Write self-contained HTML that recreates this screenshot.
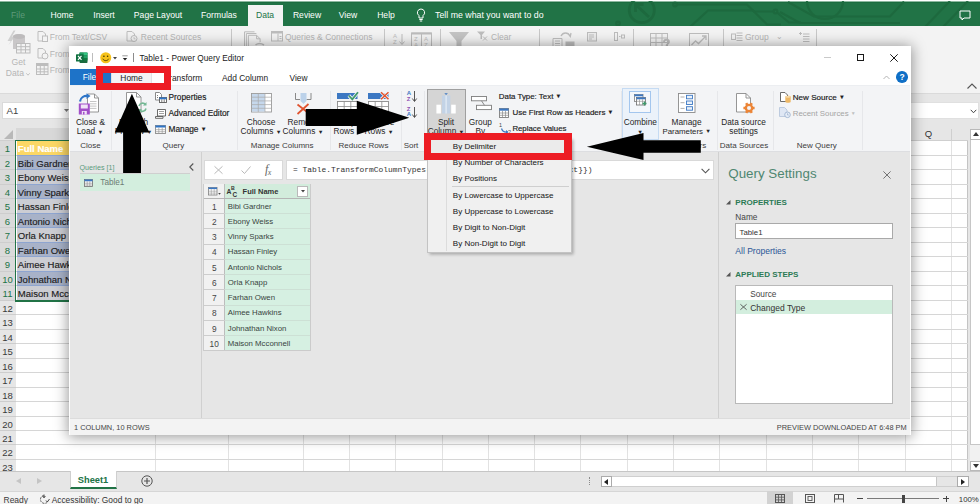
<!DOCTYPE html>
<html><head><meta charset="utf-8"><title>Power Query Editor</title>
<style>
*{box-sizing:border-box;margin:0;padding:0}
html,body{width:980px;height:504px;overflow:hidden;background:#e6e6e6}
body{position:relative;font-family:"Liberation Sans",sans-serif;font-size:8.3px;color:#262626}
.ab{position:absolute}
.t{position:absolute;white-space:nowrap;line-height:1}
.c{position:absolute;white-space:nowrap;line-height:1;transform:translateX(-50%)}
.g{color:#b3b3b3}
.vs{position:absolute;width:1px;background:#dcdcdc}
svg{position:absolute;overflow:visible}
</style></head><body>

<div class="ab" style="left:0;top:0;width:980px;height:1px;background:#fff"></div>
<div class="ab" style="left:0;top:1px;width:980px;height:25px;background:#217346;border-top:1px solid #8db8a0"></div>
<div class="ab" style="left:0;top:2px;width:980px;height:1px;background:#1b6c3f"></div>
<div class="ab" style="left:247.5px;top:4.5px;width:35.5px;height:22px;background:#f3f3f3"></div>
<svg style="left:0;top:1px;overflow:hidden" width="980" height="25" viewBox="0 1 980 25"><g fill="none" stroke="#1d693e" stroke-width="2.200" opacity=".9"><circle cx="641.800" cy="10.200" r="12.500" stroke-width="2.800"/><path d="M649 17L636 5M635.500 12V4.500h8" stroke-width="2.800"/><circle cx="675" cy="4.500" r="1.800"/><path d="M677 4.500h70l7 7h20"/><circle cx="775.500" cy="11.500" r="1.800"/><path d="M777 12.500l12 10h12"/><circle cx="618" cy="23.500" r="1.800"/><path d="M690 27l18-16.500h45l14 14h14"/><path d="M807 1a18 18 0 0 0 36 0"/><path d="M788 2l26 14.500h76l14-15"/><path d="M780 12l20 11h100"/><path d="M950 1l-25 26M968 1l-25 26"/></g></svg>
<div class="c" style="left:18px;top:11px;font-size:8.6px;color:#5f9a7b">File</div>
<div class="c" style="left:62px;top:11px;font-size:8.6px;color:#fff">Home</div>
<div class="c" style="left:104px;top:11px;font-size:8.6px;color:#fff">Insert</div>
<div class="c" style="left:158px;top:11px;font-size:8.6px;color:#fff">Page Layout</div>
<div class="c" style="left:219px;top:11px;font-size:8.6px;color:#fff">Formulas</div>
<div class="c" style="left:265px;top:11px;font-size:8.6px;color:#217346">Data</div>
<div class="c" style="left:307px;top:11px;font-size:8.6px;color:#fff">Review</div>
<div class="c" style="left:348px;top:11px;font-size:8.6px;color:#fff">View</div>
<div class="c" style="left:386px;top:11px;font-size:8.6px;color:#fff">Help</div>
<svg style="left:416px;top:8px" width="10" height="14" viewBox="0 0 10 14"><path d="M5 1a3.6 3.6 0 0 0-2 6.6V10h4V7.6A3.6 3.6 0 0 0 5 1zM3.3 11.5h3.4M3.8 13h2.4" fill="none" stroke="#fff" stroke-width="1"/></svg>
<div class="t" style="left:435px;top:11px;font-size:8.8px;color:#fff">Tell me what you want to do</div>
<svg style="left:959px;top:10px" width="12" height="11" viewBox="0 0 12 11"><path d="M1 1h10v7H5l-2 2V8H1z" fill="none" stroke="#fff" stroke-width="1"/></svg>
<div class="ab" style="left:0;top:26px;width:980px;height:67px;background:#f3f3f3"></div>
<div class="ab" style="left:0;top:93px;width:980px;height:1px;background:#dadada"></div>
<svg style="left:6px;top:30px" width="26" height="25" viewBox="0 0 26 25">
<path d="M7.500 .5L1.500 11h3.300L2.500 15l6.500-8.500H6l3.500-6z" fill="#d0d0d0"/>
<path d="M7 6.5c0-1.6 2.7-2.6 6-2.6s6 1 6 2.600V19H7z" fill="#c9c7c8"/>
<ellipse cx="13" cy="6.500" rx="6" ry="2.400" fill="#bdbbbc"/>
<rect x="10.500" y="13.500" width="13.500" height="9.500" fill="#f3f3f3" stroke="#bcbcbc"/>
<path d="M10.500 16.700h13.500M10.500 19.800h13.500M15 13.500v9.500M19.500 13.500v9.500" stroke="#bcbcbc" fill="none"/>
</svg>
<div class="c" style="left:18.5px;top:58.0px;font-size:8.6px;color:#b5b5b5">Get</div>
<div class="t" style="left:5.8px;top:69.3px;font-size:8.6px;color:#b5b5b5">Data</div>
<svg style="left:26px;top:72.500px" width="4" height="3" viewBox="0 0 4 3"><path d="M.3 .3L2 2.200 3.700 .3" fill="none" stroke="#b5b5b5" stroke-width=".8"/></svg>
<svg style="left:37px;top:31px" width="12" height="11" viewBox="0 0 12 11"><path d="M1 .5h5l2.500 2.500V10H1z" fill="#f3f3f3" stroke="#bdbdbd"/><rect x="5.500" y="5" width="5" height="5.500" fill="#f3f3f3" stroke="#bdbdbd"/></svg>
<div class="t" style="left:49.7px;top:33.0px;font-size:8.5px;color:#b5b5b5">From Text/CSV</div>
<svg style="left:37px;top:47.5px" width="12" height="11" viewBox="0 0 12 11"><path d="M1 .5h5l2.500 2.500V10H1z" fill="#f3f3f3" stroke="#bdbdbd"/><circle cx="8" cy="8" r="3" fill="#f3f3f3" stroke="#bdbdbd"/></svg>
<div class="t" style="left:49.7px;top:49.6px;font-size:8.5px;color:#b5b5b5">From</div>
<svg style="left:36px;top:63px" width="13" height="12" viewBox="0 0 13 12"><rect x=".5" y=".5" width="11.500" height="11" fill="#f3f3f3" stroke="#bdbdbd"/><rect x=".5" y=".5" width="11.500" height="2.500" fill="#bdbdbd"/><path d="M.5 6h11.500M.5 8.800h11.500M4.300 3v8.500M8.200 3v8.500" stroke="#bdbdbd" fill="none"/></svg>
<div class="t" style="left:49.7px;top:66.3px;font-size:8.5px;color:#b5b5b5">From</div>
<svg style="left:126px;top:31px" width="12" height="11" viewBox="0 0 12 11"><path d="M1 .5h5l2.500 2.500V10H1z" fill="#f3f3f3" stroke="#bdbdbd"/><circle cx="8" cy="7.500" r="3" fill="#f3f3f3" stroke="#bdbdbd"/><path d="M8 6v1.800h1.500" stroke="#bdbdbd" fill="none" stroke-width=".8"/></svg>
<div class="t" style="left:140.8px;top:33.0px;font-size:8.5px;color:#b5b5b5">Recent Sources</div>
<div class="ab" style="left:231px;top:29px;width:1px;height:17px;background:#c8c8c8"></div>
<div class="ab" style="left:384px;top:29px;width:1px;height:17px;background:#c8c8c8"></div>
<div class="ab" style="left:440px;top:29px;width:1px;height:17px;background:#c8c8c8"></div>
<div class="ab" style="left:539px;top:29px;width:1px;height:17px;background:#c8c8c8"></div>
<div class="ab" style="left:632.5px;top:29px;width:1px;height:17px;background:#c8c8c8"></div>
<div class="ab" style="left:722.5px;top:29px;width:1px;height:17px;background:#c8c8c8"></div>
<div class="ab" style="left:816px;top:29px;width:1px;height:17px;background:#c8c8c8"></div>
<svg style="left:244px;top:31px" width="21" height="16" viewBox="0 0 21 16"><path d="M.5 16V.8h10M2.400 16V2.500h10M4.400 16V4.300h8.200l3.500 3.500V11M12.600 4.300v3.500h3.500" fill="none" stroke="#bdbdbd"/><path d="M11.500 14c2.500-2 5.500-2 8.500 0" fill="none" stroke="#bdbdbd" stroke-width="1.600"/></svg>
<svg style="left:271px;top:31px" width="12" height="11" viewBox="0 0 12 11"><rect x=".5" y=".5" width="11" height="9.500" fill="#f3f3f3" stroke="#bdbdbd"/><rect x=".5" y=".5" width="11" height="2" fill="#bdbdbd"/><path d="M7 2.500v7.500M8.500 5.500h2M8.500 7.500h2" stroke="#bdbdbd" fill="none"/></svg>
<div class="t" style="left:285px;top:33.0px;font-size:8.5px;color:#b5b5b5">Queries &amp; Connections</div>
<div class="t" style="left:393px;top:33px;font-size:6px;color:#bdbdbd;line-height:6px">A<br>Z</div><svg style="left:399px;top:34px" width="6" height="12" viewBox="0 0 6 12"><path d="M3 0v10M.5 7.500L3 10.500l2.500-3" fill="none" stroke="#bdbdbd"/></svg>
<svg style="left:411px;top:32px" width="21" height="15" viewBox="0 0 21 15"><rect x=".5" y="1" width="20" height="14" fill="#f3f3f3" stroke="#bdbdbd"/><rect x=".5" y=".5" width="20" height="2" fill="#bdbdbd"/><path d="M10.500 2v13" stroke="#bdbdbd"/></svg>
<div class="t" style="left:414px;top:35.500px;font-size:6px;color:#bdbdbd;line-height:6px">Z<br>A</div><div class="t" style="left:424px;top:35.500px;font-size:6px;color:#bdbdbd;line-height:6px">A<br>Z</div>
<svg style="left:448.500px;top:31.500px" width="20" height="15" viewBox="0 0 20 15"><path d="M0 0h20l-7.500 9v6h-5V9z" fill="#c4c4c4"/></svg>
<svg style="left:477px;top:31px" width="11" height="10" viewBox="0 0 11 10"><path d="M0 .5h8L5 4v4H3.500V4z" fill="#bdbdbd"/><path d="M6 5.500l4 4M10 5.500l-4 4" stroke="#bdbdbd" fill="none"/></svg>
<div class="t" style="left:491px;top:33.0px;font-size:8.5px;color:#b5b5b5">Clear</div>
<svg style="left:553px;top:31px" width="23" height="16" viewBox="0 0 23 16"><path d="M0 7.500h9v8.500H0zM2 10h5M2 12.500h5M2 15h5" fill="none" stroke="#bdbdbd"/><path d="M8 5c2-4 7-4 9 0M15 2.500l2.300 3 .7-3.500" fill="none" stroke="#bdbdbd" stroke-width="1.300"/><rect x="12.500" y="10.500" width="9" height="5" fill="#bdbdbd"/></svg>
<svg style="left:586.500px;top:31.500px" width="11" height="10" viewBox="0 0 11 10"><rect x=".5" y=".5" width="9" height="8.500" fill="#ececec" stroke="#bdbdbd"/><path d="M2 3h5M2 5h5M2 7h3" stroke="#bdbdbd"/></svg>
<svg style="left:614px;top:32px" width="11" height="9" viewBox="0 0 11 9"><rect x=".5" y=".5" width="3" height="8" fill="none" stroke="#bdbdbd"/><rect x="7.500" y="3" width="3" height="3" fill="none" stroke="#bdbdbd"/><path d="M5 4.500h1.500" stroke="#bdbdbd"/></svg>
<svg style="left:650px;top:33px" width="21" height="14" viewBox="0 0 21 14"><rect x=".5" y=".5" width="17" height="14" fill="none" stroke="#bdbdbd"/><path d="M.5 5h17M.5 9.500h17M6 .5v14M12 .5v14" stroke="#bdbdbd" fill="none"/><path d="M14 9c0-3 5-3 5 0 0 1.500-2.500 2-2.500 4" stroke="#bdbdbd" fill="none" stroke-width="1.800"/></svg>
<svg style="left:689px;top:33px" width="20" height="14" viewBox="0 0 20 14"><rect x=".5" y=".5" width="19" height="14" fill="none" stroke="#bdbdbd"/><path d="M2.500 12l4-4 3 2.500L17 3M13 3h4v4" stroke="#bdbdbd" fill="none" stroke-width="1.300"/></svg>
<svg style="left:731px;top:32px" width="12" height="10" viewBox="0 0 12 10"><rect x=".5" y="2" width="4" height="5.500" fill="none" stroke="#bdbdbd"/><path d="M5.500 1h6M5.500 3.500h6M5.500 6h6M5.500 8.500h6" stroke="#bdbdbd"/></svg>
<div class="t" style="left:745px;top:33.0px;font-size:8.5px;color:#b5b5b5">Group</div>
<div class="t" style="left:775.5px;top:33.1px;font-size:7.5px;color:#b5b5b5">&#8964;</div>
<svg style="left:798.500px;top:31.500px" width="11" height="10" viewBox="0 0 11 10"><path d="M1.500 0v3M0 1.500h3" stroke="#bdbdbd"/><path d="M4 2h6.500M4 4.500h6.500M4 7h6.500M4 9.500h6.500" stroke="#bdbdbd"/></svg>
<svg style="left:966.500px;top:83px" width="10" height="6" viewBox="0 0 10 6"><path d="M.5 5.500L5 1l4.500 4.500" fill="none" stroke="#555" stroke-width="1.100"/></svg>
<div class="ab" style="left:2px;top:102px;width:70px;height:17px;background:#fff;border:1px solid #dadada"></div>
<div class="t" style="left:6.500px;top:106px;font-size:9.600px;color:#444">A1</div>
<svg style="left:64px;top:109px" width="5" height="3" viewBox="0 0 5 3"><path d="M0 0h5L2.500 3z" fill="#777"/></svg>
<div class="ab" style="left:900px;top:102px;width:78.500px;height:17px;background:#fff;border:1px solid #e0e0e0;border-left:none"></div>
<svg style="left:970px;top:108.500px" width="7" height="5" viewBox="0 0 8 6"><path d="M.7 1L4 4.500 7.300 1" fill="none" stroke="#444" stroke-width="1.200"/></svg>
<div class="ab" style="left:0;top:127px;width:968px;height:343.7px;background:#e6e6e6"></div>
<div class="ab" style="left:15.500px;top:141px;width:952px;height:329.7px;background:#fff"></div>
<svg style="left:4px;top:129.500px" width="9" height="9" viewBox="0 0 9 9"><path d="M9 0v9H0z" fill="#b8b8b8"/></svg>
<div class="ab" style="left:16px;top:127.500px;width:139px;height:12.700px;background:#d8d8d8"></div>
<div class="ab" style="left:155.2px;top:129px;width:1px;height:11px;background:#cfcfcf"></div>
<div class="ab" style="left:155.2px;top:141px;width:1px;height:329.7px;background:#e2e2e2"></div>
<div class="ab" style="left:227.5px;top:129px;width:1px;height:11px;background:#cfcfcf"></div>
<div class="ab" style="left:227.5px;top:141px;width:1px;height:329.7px;background:#e2e2e2"></div>
<div class="ab" style="left:302.5px;top:129px;width:1px;height:11px;background:#cfcfcf"></div>
<div class="ab" style="left:302.5px;top:141px;width:1px;height:329.7px;background:#e2e2e2"></div>
<div class="ab" style="left:348.9px;top:129px;width:1px;height:11px;background:#cfcfcf"></div>
<div class="ab" style="left:348.9px;top:141px;width:1px;height:329.7px;background:#e2e2e2"></div>
<div class="ab" style="left:395.2px;top:129px;width:1px;height:11px;background:#cfcfcf"></div>
<div class="ab" style="left:395.2px;top:141px;width:1px;height:329.7px;background:#e2e2e2"></div>
<div class="ab" style="left:441.5px;top:129px;width:1px;height:11px;background:#cfcfcf"></div>
<div class="ab" style="left:441.5px;top:141px;width:1px;height:329.7px;background:#e2e2e2"></div>
<div class="ab" style="left:487.8px;top:129px;width:1px;height:11px;background:#cfcfcf"></div>
<div class="ab" style="left:487.8px;top:141px;width:1px;height:329.7px;background:#e2e2e2"></div>
<div class="ab" style="left:534.1px;top:129px;width:1px;height:11px;background:#cfcfcf"></div>
<div class="ab" style="left:534.1px;top:141px;width:1px;height:329.7px;background:#e2e2e2"></div>
<div class="ab" style="left:580.4px;top:129px;width:1px;height:11px;background:#cfcfcf"></div>
<div class="ab" style="left:580.4px;top:141px;width:1px;height:329.7px;background:#e2e2e2"></div>
<div class="ab" style="left:626.7px;top:129px;width:1px;height:11px;background:#cfcfcf"></div>
<div class="ab" style="left:626.7px;top:141px;width:1px;height:329.7px;background:#e2e2e2"></div>
<div class="ab" style="left:673.0px;top:129px;width:1px;height:11px;background:#cfcfcf"></div>
<div class="ab" style="left:673.0px;top:141px;width:1px;height:329.7px;background:#e2e2e2"></div>
<div class="ab" style="left:719.3px;top:129px;width:1px;height:11px;background:#cfcfcf"></div>
<div class="ab" style="left:719.3px;top:141px;width:1px;height:329.7px;background:#e2e2e2"></div>
<div class="ab" style="left:765.6px;top:129px;width:1px;height:11px;background:#cfcfcf"></div>
<div class="ab" style="left:765.6px;top:141px;width:1px;height:329.7px;background:#e2e2e2"></div>
<div class="ab" style="left:811.9px;top:129px;width:1px;height:11px;background:#cfcfcf"></div>
<div class="ab" style="left:811.9px;top:141px;width:1px;height:329.7px;background:#e2e2e2"></div>
<div class="ab" style="left:858.2px;top:129px;width:1px;height:11px;background:#cfcfcf"></div>
<div class="ab" style="left:858.2px;top:141px;width:1px;height:329.7px;background:#e2e2e2"></div>
<div class="ab" style="left:904.5px;top:129px;width:1px;height:11px;background:#cfcfcf"></div>
<div class="ab" style="left:904.5px;top:141px;width:1px;height:329.7px;background:#e2e2e2"></div>
<div class="ab" style="left:950.8px;top:129px;width:1px;height:11px;background:#cfcfcf"></div>
<div class="ab" style="left:950.8px;top:141px;width:1px;height:329.7px;background:#e2e2e2"></div>
<div class="ab" style="left:997.1px;top:129px;width:1px;height:11px;background:#cfcfcf"></div>
<div class="ab" style="left:997.1px;top:141px;width:1px;height:329.7px;background:#e2e2e2"></div>
<div class="ab" style="left:0;top:140px;width:968px;height:1px;background:#cfcfcf"></div>
<div class="ab" style="left:967px;top:141px;width:1.300px;height:329.7px;background:#c4c4c4"></div>
<div class="c" style="left:928.500px;top:129px;font-size:9.500px;color:#333">Q</div>
<div class="ab" style="left:0;top:141px;width:15.500px;height:14px;background:#dadada"></div>
<div class="ab" style="left:0;top:155px;width:15.500px;height:1px;background:#cdcdcd"></div>
<div class="ab" style="left:15.500px;top:155px;width:952px;height:1px;background:#d6d6d6"></div>
<div class="t" style="left:0;width:15px;text-align:center;top:143.60px;font-size:9.500px;color:#217346">1</div>
<div class="ab" style="left:16.500px;top:141px;width:139px;height:15px;background:#fbd765;border-bottom:1px solid #8ea5d0;overflow:hidden"><div class="t" style="left:1.300px;top:3.200px;font-size:9.550px;color:#fff;font-weight:700;-webkit-text-stroke:.15px #fff">Full Name</div></div>
<div class="ab" style="left:0;top:156px;width:15.500px;height:13px;background:#dadada"></div>
<div class="ab" style="left:0;top:169px;width:15.500px;height:1px;background:#cdcdcd"></div>
<div class="ab" style="left:15.500px;top:169px;width:952px;height:1px;background:#d6d6d6"></div>
<div class="t" style="left:0;width:15px;text-align:center;top:158.60px;font-size:9.500px;color:#217346">2</div>
<div class="ab" style="left:16.500px;top:156px;width:139px;height:14px;background:#a8b2c8;border-bottom:1px solid #8ea5d0;overflow:hidden"><div class="t" style="left:1.300px;top:3.200px;font-size:9.550px;color:#1c1c1c;font-weight:400;-webkit-text-stroke:.15px #1c1c1c">Bibi Gardner</div></div>
<div class="ab" style="left:0;top:170px;width:15.500px;height:14px;background:#dadada"></div>
<div class="ab" style="left:0;top:184px;width:15.500px;height:1px;background:#cdcdcd"></div>
<div class="ab" style="left:15.500px;top:184px;width:952px;height:1px;background:#d6d6d6"></div>
<div class="t" style="left:0;width:15px;text-align:center;top:172.60px;font-size:9.500px;color:#217346">3</div>
<div class="ab" style="left:16.500px;top:170px;width:139px;height:15px;background:#cccdd3;border-bottom:1px solid #8ea5d0;overflow:hidden"><div class="t" style="left:1.300px;top:3.200px;font-size:9.550px;color:#1c1c1c;font-weight:400;-webkit-text-stroke:.15px #1c1c1c">Ebony Weiss</div></div>
<div class="ab" style="left:0;top:185px;width:15.500px;height:13px;background:#dadada"></div>
<div class="ab" style="left:0;top:198px;width:15.500px;height:1px;background:#cdcdcd"></div>
<div class="ab" style="left:15.500px;top:198px;width:952px;height:1px;background:#d6d6d6"></div>
<div class="t" style="left:0;width:15px;text-align:center;top:187.60px;font-size:9.500px;color:#217346">4</div>
<div class="ab" style="left:16.500px;top:185px;width:139px;height:14px;background:#a8b2c8;border-bottom:1px solid #8ea5d0;overflow:hidden"><div class="t" style="left:1.300px;top:3.200px;font-size:9.550px;color:#1c1c1c;font-weight:400;-webkit-text-stroke:.15px #1c1c1c">Vinny Sparks</div></div>
<div class="ab" style="left:0;top:199px;width:15.500px;height:14px;background:#dadada"></div>
<div class="ab" style="left:0;top:213px;width:15.500px;height:1px;background:#cdcdcd"></div>
<div class="ab" style="left:15.500px;top:213px;width:952px;height:1px;background:#d6d6d6"></div>
<div class="t" style="left:0;width:15px;text-align:center;top:201.60px;font-size:9.500px;color:#217346">5</div>
<div class="ab" style="left:16.500px;top:199px;width:139px;height:15px;background:#cccdd3;border-bottom:1px solid #8ea5d0;overflow:hidden"><div class="t" style="left:1.300px;top:3.200px;font-size:9.550px;color:#1c1c1c;font-weight:400;-webkit-text-stroke:.15px #1c1c1c">Hassan Finley</div></div>
<div class="ab" style="left:0;top:214px;width:15.500px;height:13px;background:#dadada"></div>
<div class="ab" style="left:0;top:227px;width:15.500px;height:1px;background:#cdcdcd"></div>
<div class="ab" style="left:15.500px;top:227px;width:952px;height:1px;background:#d6d6d6"></div>
<div class="t" style="left:0;width:15px;text-align:center;top:216.60px;font-size:9.500px;color:#217346">6</div>
<div class="ab" style="left:16.500px;top:214px;width:139px;height:14px;background:#a8b2c8;border-bottom:1px solid #8ea5d0;overflow:hidden"><div class="t" style="left:1.300px;top:3.200px;font-size:9.550px;color:#1c1c1c;font-weight:400;-webkit-text-stroke:.15px #1c1c1c">Antonio Nichols</div></div>
<div class="ab" style="left:0;top:228px;width:15.500px;height:14px;background:#dadada"></div>
<div class="ab" style="left:0;top:242px;width:15.500px;height:1px;background:#cdcdcd"></div>
<div class="ab" style="left:15.500px;top:242px;width:952px;height:1px;background:#d6d6d6"></div>
<div class="t" style="left:0;width:15px;text-align:center;top:230.60px;font-size:9.500px;color:#217346">7</div>
<div class="ab" style="left:16.500px;top:228px;width:139px;height:15px;background:#cccdd3;border-bottom:1px solid #8ea5d0;overflow:hidden"><div class="t" style="left:1.300px;top:3.200px;font-size:9.550px;color:#1c1c1c;font-weight:400;-webkit-text-stroke:.15px #1c1c1c">Orla Knapp</div></div>
<div class="ab" style="left:0;top:243px;width:15.500px;height:13px;background:#dadada"></div>
<div class="ab" style="left:0;top:256px;width:15.500px;height:1px;background:#cdcdcd"></div>
<div class="ab" style="left:15.500px;top:256px;width:952px;height:1px;background:#d6d6d6"></div>
<div class="t" style="left:0;width:15px;text-align:center;top:245.60px;font-size:9.500px;color:#217346">8</div>
<div class="ab" style="left:16.500px;top:243px;width:139px;height:14px;background:#a8b2c8;border-bottom:1px solid #8ea5d0;overflow:hidden"><div class="t" style="left:1.300px;top:3.200px;font-size:9.550px;color:#1c1c1c;font-weight:400;-webkit-text-stroke:.15px #1c1c1c">Farhan Owen</div></div>
<div class="ab" style="left:0;top:257px;width:15.500px;height:14px;background:#dadada"></div>
<div class="ab" style="left:0;top:271px;width:15.500px;height:1px;background:#cdcdcd"></div>
<div class="ab" style="left:15.500px;top:271px;width:952px;height:1px;background:#d6d6d6"></div>
<div class="t" style="left:0;width:15px;text-align:center;top:259.60px;font-size:9.500px;color:#217346">9</div>
<div class="ab" style="left:16.500px;top:257px;width:139px;height:15px;background:#cccdd3;border-bottom:1px solid #8ea5d0;overflow:hidden"><div class="t" style="left:1.300px;top:3.200px;font-size:9.550px;color:#1c1c1c;font-weight:400;-webkit-text-stroke:.15px #1c1c1c">Aimee Hawkins</div></div>
<div class="ab" style="left:0;top:272px;width:15.500px;height:13px;background:#dadada"></div>
<div class="ab" style="left:0;top:285px;width:15.500px;height:1px;background:#cdcdcd"></div>
<div class="ab" style="left:15.500px;top:285px;width:952px;height:1px;background:#d6d6d6"></div>
<div class="t" style="left:0;width:15px;text-align:center;top:274.60px;font-size:9.500px;color:#217346">10</div>
<div class="ab" style="left:16.500px;top:272px;width:139px;height:14px;background:#a8b2c8;border-bottom:1px solid #8ea5d0;overflow:hidden"><div class="t" style="left:1.300px;top:3.200px;font-size:9.550px;color:#1c1c1c;font-weight:400;-webkit-text-stroke:.15px #1c1c1c">Johnathan Nixon</div></div>
<div class="ab" style="left:0;top:286px;width:15.500px;height:14px;background:#dadada"></div>
<div class="ab" style="left:0;top:300px;width:15.500px;height:1px;background:#cdcdcd"></div>
<div class="ab" style="left:15.500px;top:300px;width:952px;height:1px;background:#d6d6d6"></div>
<div class="t" style="left:0;width:15px;text-align:center;top:288.60px;font-size:9.500px;color:#217346">11</div>
<div class="ab" style="left:16.500px;top:286px;width:139px;height:15px;background:#cccdd3;border-bottom:1px solid #8ea5d0;overflow:hidden"><div class="t" style="left:1.300px;top:3.200px;font-size:9.550px;color:#1c1c1c;font-weight:400;-webkit-text-stroke:.15px #1c1c1c">Maison Mcconnell</div></div>
<div class="ab" style="left:0;top:301px;width:15.500px;height:13px;background:#e6e6e6"></div>
<div class="ab" style="left:0;top:314px;width:15.500px;height:1px;background:#cdcdcd"></div>
<div class="ab" style="left:15.500px;top:314px;width:952px;height:1px;background:#d6d6d6"></div>
<div class="t" style="left:0;width:15px;text-align:center;top:303.60px;font-size:9.500px;color:#3a3a3a">12</div>
<div class="ab" style="left:0;top:315px;width:15.500px;height:14px;background:#e6e6e6"></div>
<div class="ab" style="left:0;top:329px;width:15.500px;height:1px;background:#cdcdcd"></div>
<div class="ab" style="left:15.500px;top:329px;width:952px;height:1px;background:#d6d6d6"></div>
<div class="t" style="left:0;width:15px;text-align:center;top:317.60px;font-size:9.500px;color:#3a3a3a">13</div>
<div class="ab" style="left:0;top:330px;width:15.500px;height:13px;background:#e6e6e6"></div>
<div class="ab" style="left:0;top:343px;width:15.500px;height:1px;background:#cdcdcd"></div>
<div class="ab" style="left:15.500px;top:343px;width:952px;height:1px;background:#d6d6d6"></div>
<div class="t" style="left:0;width:15px;text-align:center;top:332.60px;font-size:9.500px;color:#3a3a3a">14</div>
<div class="ab" style="left:0;top:344px;width:15.500px;height:14px;background:#e6e6e6"></div>
<div class="ab" style="left:0;top:358px;width:15.500px;height:1px;background:#cdcdcd"></div>
<div class="ab" style="left:15.500px;top:358px;width:952px;height:1px;background:#d6d6d6"></div>
<div class="t" style="left:0;width:15px;text-align:center;top:346.60px;font-size:9.500px;color:#3a3a3a">15</div>
<div class="ab" style="left:0;top:359px;width:15.500px;height:13px;background:#e6e6e6"></div>
<div class="ab" style="left:0;top:372px;width:15.500px;height:1px;background:#cdcdcd"></div>
<div class="ab" style="left:15.500px;top:372px;width:952px;height:1px;background:#d6d6d6"></div>
<div class="t" style="left:0;width:15px;text-align:center;top:361.60px;font-size:9.500px;color:#3a3a3a">16</div>
<div class="ab" style="left:0;top:373px;width:15.500px;height:14px;background:#e6e6e6"></div>
<div class="ab" style="left:0;top:387px;width:15.500px;height:1px;background:#cdcdcd"></div>
<div class="ab" style="left:15.500px;top:387px;width:952px;height:1px;background:#d6d6d6"></div>
<div class="t" style="left:0;width:15px;text-align:center;top:375.60px;font-size:9.500px;color:#3a3a3a">17</div>
<div class="ab" style="left:0;top:388px;width:15.500px;height:13px;background:#e6e6e6"></div>
<div class="ab" style="left:0;top:401px;width:15.500px;height:1px;background:#cdcdcd"></div>
<div class="ab" style="left:15.500px;top:401px;width:952px;height:1px;background:#d6d6d6"></div>
<div class="t" style="left:0;width:15px;text-align:center;top:390.60px;font-size:9.500px;color:#3a3a3a">18</div>
<div class="ab" style="left:0;top:402px;width:15.500px;height:14px;background:#e6e6e6"></div>
<div class="ab" style="left:0;top:416px;width:15.500px;height:1px;background:#cdcdcd"></div>
<div class="ab" style="left:15.500px;top:416px;width:952px;height:1px;background:#d6d6d6"></div>
<div class="t" style="left:0;width:15px;text-align:center;top:404.60px;font-size:9.500px;color:#3a3a3a">19</div>
<div class="ab" style="left:0;top:417px;width:15.500px;height:13px;background:#e6e6e6"></div>
<div class="ab" style="left:0;top:430px;width:15.500px;height:1px;background:#cdcdcd"></div>
<div class="ab" style="left:15.500px;top:430px;width:952px;height:1px;background:#d6d6d6"></div>
<div class="t" style="left:0;width:15px;text-align:center;top:419.60px;font-size:9.500px;color:#3a3a3a">20</div>
<div class="ab" style="left:0;top:431px;width:15.500px;height:13px;background:#e6e6e6"></div>
<div class="ab" style="left:0;top:444px;width:15.500px;height:1px;background:#cdcdcd"></div>
<div class="ab" style="left:15.500px;top:444px;width:952px;height:1px;background:#d6d6d6"></div>
<div class="t" style="left:0;width:15px;text-align:center;top:433.60px;font-size:9.500px;color:#3a3a3a">21</div>
<div class="ab" style="left:0;top:445px;width:15.500px;height:14px;background:#e6e6e6"></div>
<div class="ab" style="left:0;top:459px;width:15.500px;height:1px;background:#cdcdcd"></div>
<div class="ab" style="left:15.500px;top:459px;width:952px;height:1px;background:#d6d6d6"></div>
<div class="t" style="left:0;width:15px;text-align:center;top:447.60px;font-size:9.500px;color:#3a3a3a">22</div>
<div class="ab" style="left:0;top:460px;width:15.500px;height:13px;background:#e6e6e6"></div>
<div class="ab" style="left:0;top:473px;width:15.500px;height:1px;background:#cdcdcd"></div>
<div class="ab" style="left:15.500px;top:473px;width:952px;height:1px;background:#d6d6d6"></div>
<div class="t" style="left:0;width:15px;text-align:center;top:462.60px;font-size:9.500px;color:#3a3a3a">23</div>
<div class="ab" style="left:15px;top:140px;width:141.500px;height:162px;border:1.400px solid #217346;border-bottom-width:2px"></div>
<div class="ab" style="left:970px;top:128.500px;width:10px;height:342.2px;background:#f1f1f1"></div>
<div class="ab" style="left:970px;top:139px;width:11px;height:305.500px;background:#fff;border:1px solid #c6c6c6"></div>
<div class="ab" style="left:970px;top:128.500px;width:10px;height:11px;background:#fff;border:1px solid #b9b9b9;border-right:none"></div>
<svg style="left:972.500px;top:132px" width="6" height="4" viewBox="0 0 6 4"><path d="M0 4L3 0l3 4z" fill="#333"/></svg>
<div class="ab" style="left:970px;top:461px;width:10px;height:10px;background:#fff;border:1px solid #b9b9b9;border-right:none"></div>
<svg style="left:972.500px;top:464.300px" width="6" height="4" viewBox="0 0 6 4"><path d="M0 0L3 4l3-4z" fill="#333"/></svg>
<div class="ab" style="left:0;top:470.7px;width:980px;height:20px;background:#e6e6e6;border-top:1px solid #c6c6c6"></div>
<svg style="left:16px;top:477.500px" width="5" height="6" viewBox="0 0 5 6"><path d="M5 0L0 3l5 3z" fill="#c4c4c4"/></svg>
<svg style="left:37px;top:477.500px" width="5" height="6" viewBox="0 0 5 6"><path d="M0 0l5 3-5 3z" fill="#c4c4c4"/></svg>
<div class="ab" style="left:70px;top:471px;width:46.700px;height:18px;background:#fff;border-bottom:2px solid #217346;border-left:1px solid #cfcfcf;border-right:1px solid #cfcfcf"></div>
<div class="c" style="left:93px;top:475.500px;font-size:9.300px;font-weight:700;color:#217346">Sheet1</div>
<svg style="left:141px;top:475px" width="12" height="12" viewBox="0 0 12 12"><circle cx="6" cy="6" r="5.200" fill="none" stroke="#555" stroke-width="1"/><path d="M6 3v6M3 6h6" stroke="#555" stroke-width="1.200"/></svg>
<div class="ab" style="left:589px;top:477px;width:1px;height:8px;border-left:1px dotted #8a8a8a"></div>
<div class="ab" style="left:601px;top:476px;width:367.500px;height:11px;background:#fff;border:1px solid #cfcfcf"></div>
<div class="ab" style="left:601px;top:476px;width:10.500px;height:11px;background:#fff;border:1px solid #ababab"></div>
<svg style="left:604px;top:478.500px" width="4" height="6" viewBox="0 0 4 6"><path d="M4 0L0 3l4 3z" fill="#222"/></svg>
<div class="ab" style="left:936px;top:477px;width:20.500px;height:9px;background:#e6e6e6;border-left:1px solid #c6c6c6"></div>
<div class="ab" style="left:956.500px;top:476px;width:12px;height:11px;background:#fff;border:1px solid #ababab"></div>
<svg style="left:960.500px;top:478.500px" width="4" height="6" viewBox="0 0 4 6"><path d="M0 0l4 3-4 3z" fill="#222"/></svg>
<div class="ab" style="left:0;top:490.500px;width:980px;height:13.500px;background:#f3f3f3;border-top:1px solid #d6d6d6"></div>
<div class="t" style="left:3.500px;top:495.600px;font-size:8.500px;color:#3b3b3b">Ready</div>
<svg style="left:38.500px;top:494px" width="11" height="10" viewBox="0 0 11 10"><path d="M4.500 1.500A4 4 0 1 0 8.500 8" fill="none" stroke="#444" stroke-width=".9" stroke-dasharray="2 1"/><path d="M5 .5v3.500M3.500 2l1.500 1.500L6.500 2M7 6.500l1.300 1.500L10.500 5" fill="none" stroke="#333" stroke-width=".9"/></svg>
<div class="t" style="left:51.700px;top:495.600px;font-size:8.370px;color:#333">Accessibility: Good to go</div>
<div class="ab" style="left:766.500px;top:491px;width:26px;height:13px;background:#d2d2d2"></div>
<svg style="left:775px;top:494px" width="10" height="9" viewBox="0 0 10 9"><rect x=".5" y=".5" width="9" height="8" fill="none" stroke="#555"/><path d="M.5 3.200h9M.5 5.900h9M3.500 .5v8M6.500 .5v8" stroke="#555" fill="none" stroke-width=".8"/></svg>
<svg style="left:804.500px;top:494px" width="10" height="9" viewBox="0 0 10 9"><rect x=".5" y=".5" width="9" height="8" fill="none" stroke="#555"/><rect x="3" y="2.500" width="4" height="4" fill="none" stroke="#555" stroke-width=".9"/></svg>
<svg style="left:833.500px;top:494px" width="10" height="9" viewBox="0 0 10 9"><path d="M.5 8.500V.5h9v8M.5 5h4V.5M4.500 5h5" fill="none" stroke="#555"/></svg>
<div class="ab" style="left:857px;top:498.200px;width:5.500px;height:1.100px;background:#444"></div>
<div class="ab" style="left:866.500px;top:498.300px;width:72.500px;height:1px;background:#7a7a7a"></div>
<div class="ab" style="left:901.500px;top:494.500px;width:3px;height:8.500px;background:#444"></div>
<div class="ab" style="left:943px;top:498.200px;width:6px;height:1.100px;background:#444"></div><div class="ab" style="left:945.500px;top:495.700px;width:1.100px;height:6px;background:#444"></div>
<div class="t" style="left:958.800px;top:495.800px;font-size:7.800px;color:#333">100%</div>
<div class="ab" id="pq" style="left:69px;top:46px;width:841.5px;height:389px;background:#fff;box-shadow:0 1px 13px 1px rgba(0,0,0,.40)"></div>
<svg style="left:76px;top:51.500px" width="12" height="11.500" viewBox="0 0 24 23">
<rect x="7" y="1" width="16" height="21" rx="1.500" fill="#1d6b41"/><rect x="7" y="1" width="8" height="5.500" fill="#21a366"/><rect x="15" y="1" width="8" height="5.500" fill="#33c481"/><rect x="7" y="6.500" width="8" height="5.500" fill="#107c41"/><rect x="15" y="6.500" width="8" height="5.500" fill="#21a366"/><rect x="15" y="12" width="8" height="5" fill="#107c41"/>
<rect x="0" y="4.500" width="15" height="14.500" rx="1.200" fill="#107040"/><path d="M4 7.800l7 8M11 7.800l-7 8" stroke="#fff" stroke-width="2.400"/></svg>
<div class="ab" style="left:92.200px;top:53px;width:1px;height:8.500px;background:#bdbdbd"></div>
<svg style="left:99.500px;top:52px" width="11.500" height="11.500" viewBox="0 0 23 23"><circle cx="11.500" cy="11.500" r="11" fill="#f6c21b"/><circle cx="7.800" cy="8.500" r="1.600" fill="#3b3100"/><circle cx="15.200" cy="8.500" r="1.600" fill="#3b3100"/><path d="M5.500 13.500c2.500 5 9.500 5 12 0" fill="none" stroke="#3b3100" stroke-width="1.700"/></svg>
<svg style="left:113px;top:56.500px" width="4" height="3" viewBox="0 0 4 3"><path d="M0 0h4L2 2.600z" fill="#444"/></svg>
<svg style="left:122px;top:55px" width="6" height="6" viewBox="0 0 6 6"><path d="M.3 .8h5.400" stroke="#9a9a9a" stroke-width="1"/><path d="M.8 3h4.400L3 5.600z" fill="#222"/></svg>
<div class="ab" style="left:133px;top:53px;width:1px;height:8.500px;background:#8c8c8c"></div>
<div class="t" style="left:139.500px;top:54px;font-size:8.320px;color:#1a1a1a">Table1 - Power Query Editor</div>
<div class="ab" style="left:824px;top:57px;width:7px;height:1px;background:#c9c9c9"></div>
<div class="ab" style="left:856.500px;top:53.500px;width:7.500px;height:7.500px;border:1.100px solid #1a1a1a"></div>
<svg style="left:889.500px;top:53.500px" width="8" height="8" viewBox="0 0 8 8"><path d="M.3 .3l7.400 7.400M7.700 .3L.3 7.700" stroke="#1a1a1a" stroke-width="1"/></svg>
<svg style="left:882.500px;top:75px" width="7" height="5" viewBox="0 0 7 5"><path d="M.5 4L3.500 1l3 3" fill="none" stroke="#b5b5b5" stroke-width="1"/></svg>
<div class="ab" style="left:896.300px;top:71.200px;width:11.600px;height:11.600px;border-radius:50%;background:#0f6fc6"></div><div class="c" style="left:902.200px;top:72.800px;font-size:8.500px;font-weight:700;color:#fff">?</div>
<div class="ab" style="left:70px;top:69px;width:40.500px;height:16.500px;background:#1e73c8"></div>
<div class="c" style="left:89.500px;top:73.300px;font-size:8.400px;color:#fff">File</div>
<div class="ab" style="left:110.500px;top:71px;width:41.500px;height:15px;background:#f3f4f6;border:1px solid #e2e3e6;border-bottom:none"></div>
<div class="c" style="left:131.500px;top:73.500px;font-size:8.400px;color:#222">Home</div>
<div class="t" style="left:164.300px;top:73.500px;font-size:8.400px;color:#222">Transform</div>
<div class="t" style="left:222px;top:73.500px;font-size:8.400px;color:#222">Add Column</div>
<div class="t" style="left:289.500px;top:73.500px;font-size:8.400px;color:#222">View</div>
<div class="ab" style="left:69.5px;top:85px;width:840.5px;height:67px;background:#f3f4f6;border-top:1px solid #eceef1;border-bottom:1px solid #dddee1"></div>
<div class="ab" style="left:69.5px;top:152px;width:840.5px;height:266.500px;background:#e6e6e6"></div>
<div class="vs" style="left:111px;top:91px;height:58.500px;background:#e6e7ea"></div>
<div class="vs" style="left:237px;top:91px;height:58.500px;background:#e6e7ea"></div>
<div class="vs" style="left:329.5px;top:91px;height:58.500px;background:#e6e7ea"></div>
<div class="vs" style="left:400.5px;top:91px;height:58.500px;background:#e6e7ea"></div>
<div class="vs" style="left:423.5px;top:91px;height:58.500px;background:#e6e7ea"></div>
<div class="vs" style="left:621px;top:91px;height:58.500px;background:#e6e7ea"></div>
<div class="vs" style="left:717px;top:91px;height:58.500px;background:#e6e7ea"></div>
<div class="vs" style="left:773.3px;top:91px;height:58.500px;background:#e6e7ea"></div>
<div class="vs" style="left:862.3px;top:91px;height:58.500px;background:#e6e7ea"></div>
<div class="c" style="left:90.5px;top:142.42px;font-size:8.0px;color:#3c3c3c;font-weight:400">Close</div>
<div class="c" style="left:173.4px;top:142.42px;font-size:8.0px;color:#3c3c3c;font-weight:400">Query</div>
<div class="c" style="left:282.2px;top:142.42px;font-size:8.0px;color:#3c3c3c;font-weight:400">Manage Columns</div>
<div class="c" style="left:363.5px;top:142.42px;font-size:8.0px;color:#3c3c3c;font-weight:400">Reduce Rows</div>
<div class="c" style="left:411px;top:142.42px;font-size:8.0px;color:#3c3c3c;font-weight:400">Sort</div>
<div class="c" style="left:744px;top:142.42px;font-size:8.0px;color:#3c3c3c;font-weight:400">Data Sources</div>
<div class="c" style="left:816.8px;top:142.42px;font-size:8.0px;color:#3c3c3c;font-weight:400">New Query</div>
<div class="c" style="left:685.5px;top:142.42px;font-size:8.0px;color:#3c3c3c;font-weight:400">Parameters</div>
<div class="c" style="left:522px;top:142.42px;font-size:8.0px;color:#3c3c3c;font-weight:400">Transform</div>
<svg style="left:78px;top:92.500px" width="22" height="22" viewBox="0 0 22 22">
<path d="M9.500 1h7l4 4v14h-11z" fill="#fff" stroke="#8a8a8a" stroke-width=".9"/><path d="M16.500 1v4h4" fill="none" stroke="#8a8a8a" stroke-width=".9"/>
<path d="M12 8.500h6.500M12 10.800h6.500M12 13.100h6.500M12 15.400h6.500" stroke="#b5b5b5" stroke-width=".8"/>
<rect x=".8" y="10.500" width="11" height="11" fill="#a24fc9"/><rect x="2.800" y="11.500" width="7" height="4" fill="#f1e4f7"/><rect x="3.800" y="18" width="5" height="3.500" fill="#f1e4f7"/><rect x="5" y="18.800" width="1.500" height="2.700" fill="#a24fc9"/>
<path d="M2 8.500c.5-4 4-6 8-5.500" fill="none" stroke="#2e75c8" stroke-width="2.200"/><path d="M8.500 .3l4 2.800-4 2.800z" fill="#2e75c8"/></svg>
<div class="c" style="left:90.5px;top:117.55px;font-size:8.3px;color:#262626;font-weight:400">Close &amp;</div>
<div class="c" style="left:90px;top:127.45px;font-size:8.3px;color:#262626;font-weight:400">Load <span style="font-size:5.800px;position:relative;top:-.8px">&#9660;</span></div>
<svg style="left:126px;top:92px" width="22" height="22" viewBox="0 0 22 22"><path d="M.5 .5h10l4.500 4.500V21H.5z" fill="#fff" stroke="#8a8a8a" stroke-width=".9"/><path d="M10.500 .5V5H15" fill="none" stroke="#8a8a8a" stroke-width=".9"/>
<path d="M13 14a3.600 3.600 0 0 1 6.500-1.300M20 16.500a3.600 3.600 0 0 1-6.500 1.300" fill="none" stroke="#74b894" stroke-width="1.600"/><path d="M20.500 10v3.500H17zM12.500 20.500V17H16z" fill="#74b894"/></svg>
<div class="c" style="left:133.5px;top:117.55px;font-size:8.3px;color:#262626;font-weight:400">Refresh</div>
<div class="c" style="left:133.5px;top:127.45px;font-size:8.3px;color:#262626;font-weight:400">Preview <span style="font-size:5.800px;position:relative;top:-.8px">&#9660;</span></div>
<svg style="left:155px;top:91.500px" width="12" height="11" viewBox="0 0 12 11"><path d="M.5 .5h4l2 2V8H.5z" fill="#fff" stroke="#7d7d7d" stroke-width=".9"/><path d="M2 3.500h1M2 5.500h1" stroke="#7d7d7d"/><rect x="4.500" y="5.500" width="7" height="5" fill="#fff" stroke="#5b5b5b" stroke-width=".9"/><rect x="4.500" y="5.500" width="7" height="1.800" fill="#2e75c8"/><path d="M6.800 7.300v3.200M9.200 7.300v3.200" stroke="#5b5b5b" stroke-width=".8"/></svg>
<svg style="left:155px;top:108.500px" width="11" height="10" viewBox="0 0 11 10"><path d="M2.500 .5h8v6.500h-8zM.5 7.500h7.500v1.800H.5z" fill="#fff" stroke="#5b5b5b" stroke-width=".9"/><path d="M4 2.500h5M4 4.500h5" stroke="#8a8a8a" stroke-width=".8"/></svg>
<svg style="left:155px;top:124.500px" width="11" height="9" viewBox="0 0 11 9"><rect x=".5" y=".5" width="10" height="8" fill="#fff" stroke="#8a8a8a" stroke-width=".9"/><rect x=".5" y=".5" width="10" height="2" fill="#2e75c8"/><path d="M.5 4.700h10M.5 6.700h10M3.800 2.500v6M7.200 2.500v6" stroke="#9a9a9a" stroke-width=".7"/></svg>
<div class="t" style="left:168.5px;top:92.85px;font-size:8.3px;color:#1c1c1c;-webkit-text-stroke:.18px #1c1c1c;font-weight:400">Properties</div>
<div class="t" style="left:168.5px;top:108.85px;font-size:8.3px;color:#1c1c1c;-webkit-text-stroke:.18px #1c1c1c;font-weight:400">Advanced Editor</div>
<div class="t" style="left:168.5px;top:124.65px;font-size:8.3px;color:#1c1c1c;-webkit-text-stroke:.18px #1c1c1c;font-weight:400">Manage <span style="font-size:5.800px;position:relative;top:-.8px">&#9660;</span></div>
<svg style="left:251px;top:93px" width="21" height="19.500" viewBox="0 0 21 19.500"><rect x=".5" y=".5" width="20" height="18.500" fill="#fff" stroke="#9a9a9a" stroke-width=".9"/><rect x="1" y="1" width="13" height="17.500" fill="#c6d8ec"/><path d="M.5 4.200h20M.5 7.900h20M.5 11.600h20M.5 15.300h20M7.300 .5v18.500M14 .5v18.500" stroke="#a9a9a9" stroke-width=".7" fill="none"/></svg>
<div class="c" style="left:261px;top:117.55px;font-size:8.3px;color:#262626;font-weight:400">Choose</div>
<div class="c" style="left:261px;top:127.45px;font-size:8.3px;color:#262626;font-weight:400">Columns <span style="font-size:5.800px;position:relative;top:-.8px">&#9660;</span></div>
<svg style="left:295px;top:93px" width="17" height="22" viewBox="0 0 17 22"><path d="M.5 0v6.500h4.500M16 0v6.500h-4.500" fill="none" stroke="#7d7d7d" stroke-width=".9"/><path d="M5.500 0h6v8l-3 3-3-3z" fill="#bcd2ea"/><path d="M2.500 11.500l11.500 9M13.500 11l-11 10" stroke="#e0532f" stroke-width="1.700" fill="none"/></svg>
<div class="c" style="left:303px;top:117.55px;font-size:8.3px;color:#262626;font-weight:400">Remove</div>
<div class="c" style="left:303px;top:127.45px;font-size:8.3px;color:#262626;font-weight:400">Columns <span style="font-size:5.800px;position:relative;top:-.8px">&#9660;</span></div>
<svg style="left:337px;top:91px" width="22" height="21" viewBox="0 0 22 21"><rect x="0" y="2" width="20.500" height="6" fill="#3c78c3"/><path d="M11.800 4.500l3.500 3.800L21 1.200" fill="none" stroke="#f3f4f6" stroke-width="3.400"/><path d="M11.800 4.500l3.500 3.800L21 1.200" fill="none" stroke="#3f9a6b" stroke-width="1.800"/><rect x=".5" y="10.500" width="20" height="10" fill="#fff" stroke="#8a8a8a" stroke-width=".9"/><path d="M.5 15.500h20M7.200 10.500v10M13.800 10.500v10" stroke="#8a8a8a" stroke-width=".8"/></svg>
<svg style="left:368.3px;top:91px" width="22" height="21" viewBox="0 0 22 21"><rect x="0" y="2" width="20.500" height="6" fill="#3c78c3"/><path d="M13 1.200l7.500 7M20.500 1.200l-7.500 7" fill="none" stroke="#f3f4f6" stroke-width="3"/><path d="M13 1.200l7.500 7M20.500 1.200l-7.500 7" fill="none" stroke="#e0532f" stroke-width="1.500"/><rect x=".5" y="10.500" width="20" height="10" fill="#fff" stroke="#8a8a8a" stroke-width=".9"/><path d="M.5 15.500h20M7.200 10.500v10M13.800 10.500v10" stroke="#8a8a8a" stroke-width=".8"/></svg>
<div class="c" style="left:346px;top:117.55px;font-size:8.3px;color:#262626;font-weight:400">Keep</div>
<div class="c" style="left:347.8px;top:127.45px;font-size:8.3px;color:#262626;font-weight:400">Rows <span style="font-size:5.800px;position:relative;top:-.8px">&#9660;</span></div>
<div class="c" style="left:379px;top:117.55px;font-size:8.3px;color:#262626;font-weight:400">Remove</div>
<div class="c" style="left:379px;top:127.45px;font-size:8.3px;color:#262626;font-weight:400">Rows <span style="font-size:5.800px;position:relative;top:-.8px">&#9660;</span></div>
<div class="t" style="left:406.800px;top:91.300px;font-size:6px;line-height:5.600px;font-weight:700"><span style="color:#3c78c3">A</span><br><span style="color:#8c4fb3">Z</span></div><svg style="left:411.800px;top:90.800px" width="5" height="11" viewBox="0 0 5 11"><path d="M2.500 0v10M.3 7.500l2.200 3 2.200-3" fill="none" stroke="#444" stroke-width=".9"/></svg>
<div class="t" style="left:406.800px;top:106.800px;font-size:6px;line-height:5.600px;font-weight:700"><span style="color:#8c4fb3">Z</span><br><span style="color:#3c78c3">A</span></div><svg style="left:411.800px;top:107px" width="5" height="11" viewBox="0 0 5 11"><path d="M2.500 0v10M.3 7.500l2.200 3 2.200-3" fill="none" stroke="#444" stroke-width=".9"/></svg>
<div class="ab" style="left:427.200px;top:89.200px;width:38.500px;height:48px;background:#d5d5d5;border:1px solid #9f9f9f"></div>
<svg style="left:436px;top:92.500px" width="20" height="21" viewBox="0 0 20 21"><rect x=".4" y="11.700" width="4.500" height="8.800" fill="#fff"/><rect x="15.200" y="11.700" width="4.500" height="8.800" fill="#fff"/><rect x="6" y="2.500" width="8.300" height="18" fill="#c3d3e6"/><rect x="9.300" y="2.500" width="1.700" height="18" fill="#dbe5f1"/><path d="M8.300 .3h3.600L10.100 2z" fill="#3c78c3"/></svg>
<div class="c" style="left:446px;top:117.55px;font-size:8.3px;color:#262626;font-weight:400">Split</div>
<div class="c" style="left:446px;top:127.45px;font-size:8.3px;color:#262626;font-weight:400">Column <span style="font-size:5.800px;position:relative;top:-.8px">&#9660;</span></div>
<svg style="left:470.500px;top:96px" width="21" height="14" viewBox="0 0 21 14"><rect x=".5" y=".5" width="15" height="4.300" fill="#fff" stroke="#7d7d7d" stroke-width=".9"/><rect x="5.500" y="9.300" width="15" height="4.300" fill="#fff" stroke="#7d7d7d" stroke-width=".9"/><path d="M10.500 4.800l3 4.500" stroke="#7d7d7d" stroke-width=".9"/></svg>
<div class="c" style="left:480.4px;top:117.55px;font-size:8.3px;color:#262626;font-weight:400">Group</div>
<div class="c" style="left:480.4px;top:127.45px;font-size:8.3px;color:#262626;font-weight:400">By</div>
<div class="t" style="left:498.8px;top:92.98px;font-size:7.9px;color:#1c1c1c;-webkit-text-stroke:.18px #1c1c1c;font-weight:400">Data Type: Text <span style="font-size:5.800px;position:relative;top:-.8px">&#9660;</span></div>
<svg style="left:499px;top:108px" width="10" height="10" viewBox="0 0 10 10"><rect x=".5" y=".5" width="9" height="9" fill="#fff" stroke="#7d7d7d" stroke-width=".9"/><rect x=".5" y=".5" width="9" height="2.200" fill="#3c78c3"/><path d="M.5 5h9M.5 7.300h9M3.500 2.700v6.800M6.500 2.700v6.800" stroke="#8a8a8a" stroke-width=".7"/></svg>
<div class="t" style="left:512.4px;top:108.93px;font-size:7.98px;color:#1c1c1c;-webkit-text-stroke:.18px #1c1c1c;font-weight:400">Use First Row as Headers <span style="font-size:5.800px;position:relative;top:-.8px">&#9660;</span></div>
<div class="t" style="left:499px;top:123px;font-size:5.500px;color:#444">1</div><svg style="left:500.500px;top:127.500px" width="8" height="6" viewBox="0 0 8 6"><path d="M.5 .5c1 3 3 4 6 3.500" fill="none" stroke="#3c78c3" stroke-width="1.300"/><path d="M5 2l2.500 2L5 6z" fill="#3c78c3"/></svg><div class="t" style="left:508px;top:129.500px;font-size:5.500px;color:#444">2</div>
<div class="t" style="left:512.4px;top:125.03px;font-size:7.8px;color:#1c1c1c;-webkit-text-stroke:.18px #1c1c1c;font-weight:400">Replace Values</div>
<div class="ab" style="left:622px;top:88px;width:37.300px;height:52px;background:#ebf2fa;border:1px solid #c5dbf3"></div>
<div class="ab" style="left:629.200px;top:91.300px;width:22px;height:21.600px;background:#f4f7fb;border:1px solid #a3c6ee"></div>
<svg style="left:634px;top:94px" width="13" height="12" viewBox="0 0 13 12"><rect x=".5" y=".5" width="8.500" height="7" fill="#fff" stroke="#7d7d7d" stroke-width=".8"/><rect x=".5" y=".5" width="8.500" height="1.800" fill="#3c78c3"/><rect x="2.500" y="3.500" width="9" height="7.500" fill="#fff" stroke="#6d6d6d" stroke-width=".8"/><rect x="2.500" y="3.500" width="9" height="1.800" fill="#3c78c3"/><path d="M2.500 7.300h9M5.500 5.300v5.700M8.500 5.300v5.700" stroke="#8a8a8a" stroke-width=".6"/><path d="M10.500 7.500v4M8.500 9.500h4" stroke="#3f9a6b" stroke-width="1.300"/></svg>
<div class="c" style="left:640.3px;top:117.55px;font-size:8.3px;color:#262626;font-weight:400">Combine</div>
<div class="c" style="left:640px;top:127.45px;font-size:8.3px;color:#262626;font-weight:400"><span style="font-size:5.800px;position:relative;top:-.8px">&#9660;</span></div>
<svg style="left:678px;top:93px" width="17.500" height="20" viewBox="0 0 17.500 20"><rect x=".5" y=".5" width="16.500" height="19" fill="#fff" stroke="#8a8a8a" stroke-width=".9"/><path d="M2.500 4h4M2.500 9.700h4M2.500 15.400h4" stroke="#a5a5a5" stroke-width=".9"/><rect x="8.500" y="2.300" width="6" height="3.500" fill="#eaf1fa" stroke="#3c78c3" stroke-width=".9"/><rect x="8.500" y="8" width="6" height="3.500" fill="#eaf1fa" stroke="#3c78c3" stroke-width=".9"/><rect x="8.500" y="13.700" width="6" height="3.500" fill="#eaf1fa" stroke="#3c78c3" stroke-width=".9"/></svg>
<div class="c" style="left:686.5px;top:117.55px;font-size:8.3px;color:#262626;font-weight:400">Manage</div>
<div class="c" style="left:686.7px;top:127.70px;font-size:7.85px;color:#262626;font-weight:400">Parameters <span style="font-size:5.800px;position:relative;top:-.8px">&#9660;</span></div>
<svg style="left:736px;top:93px" width="20" height="21" viewBox="0 0 20 21"><path d="M.5 .5h9.500l4.500 4.500V19H.5z" fill="#fff" stroke="#8a8a8a" stroke-width=".9"/><path d="M10 .5V5h4.500" fill="none" stroke="#8a8a8a" stroke-width=".9"/><g transform="translate(13,15)"><circle r="3.300" fill="none" stroke="#ec8537" stroke-width="2.100"/><path d="M-5.600 0h11.200M-2.800-4.850l5.600 9.700M2.800-4.850l-5.600 9.700" stroke="#ec8537" stroke-width="2.500"/><circle r="2" fill="#f3f4f6"/></g></svg>
<div class="c" style="left:743.6px;top:117.55px;font-size:8.3px;color:#262626;font-weight:400">Data source</div>
<div class="c" style="left:743.6px;top:127.15px;font-size:8.3px;color:#262626;font-weight:400">settings</div>
<svg style="left:780px;top:92px" width="11" height="11" viewBox="0 0 11 11"><path d="M.5 .5h4.500l2.500 2.500V9.500H.5z" fill="#fff" stroke="#5b5b5b" stroke-width=".9"/><path d="M5.300 4.800c0-1.300 5.400-1.300 5.400 0v5c0 1.300-5.400 1.300-5.400 0z" fill="#eeb866"/><ellipse cx="8" cy="4.800" rx="2.700" ry=".9" fill="#f7dcae"/></svg>
<div class="t" style="left:792.8px;top:93.69px;font-size:8.05px;color:#1c1c1c;-webkit-text-stroke:.18px #1c1c1c;font-weight:400">New Source <span style="font-size:5.800px;position:relative;top:-.8px">&#9660;</span></div>
<svg style="left:778.500px;top:106.800px" width="12" height="11" viewBox="0 0 12 11"><path d="M.5 .5h5l2.500 2.500V9.500H.5z" fill="#dfe7f4" stroke="#b8c6dc" stroke-width=".9"/><circle cx="8.500" cy="7.800" r="2.800" fill="#e6edf7" stroke="#9fb4d1" stroke-width=".9"/><path d="M8.500 6.300v1.700h1.300" fill="none" stroke="#9fb4d1" stroke-width=".8"/></svg>
<div class="t" style="left:792.8px;top:109.80px;font-size:7.85px;color:#a4a4a4;font-weight:400">Recent Sources <span style="font-size:5px;position:relative;top:-1px;color:#c0c0c0">&#9660;</span></div>
<div class="t" style="left:79.5px;top:164.60px;font-size:7.15px;color:#5b9a7d;font-weight:400">Queries [1]</div>
<svg style="left:188.500px;top:162.500px" width="5" height="8" viewBox="0 0 5 8"><path d="M4.300 .5L.8 4l3.500 3.500" fill="none" stroke="#555" stroke-width="1.100"/></svg>
<div class="ab" style="left:79.500px;top:173px;width:110.500px;height:1px;background:#cfcfcf"></div>
<div class="ab" style="left:79.500px;top:174px;width:110.500px;height:16.700px;background:#d3eede"></div>
<svg style="left:84px;top:178.500px" width="9" height="8" viewBox="0 0 9 8"><rect x=".5" y=".5" width="8" height="7" fill="#fff" stroke="#6d6d6d" stroke-width=".8"/><rect x=".5" y=".5" width="8" height="1.800" fill="#3c78c3"/><path d="M.5 4.200h8M.5 6h8M3.200 2.300v5.200M5.800 2.300v5.200" stroke="#8a8a8a" stroke-width=".6"/></svg>
<div class="t" style="left:100.3px;top:179.01px;font-size:8.2px;color:#6c7c74;font-weight:400">Table1</div>
<div class="ab" style="left:200.500px;top:152px;width:1px;height:266px;background:#d0d0d0"></div>
<div class="ab" style="left:718px;top:152px;width:1px;height:266px;background:#d0d0d0"></div>
<div class="ab" style="left:203.500px;top:160.300px;width:79px;height:19.600px;background:#fff;border:1px solid #d9d9d9"></div>
<svg style="left:213.500px;top:166px" width="9" height="8" viewBox="0 0 9 8"><path d="M.5 .3l8 7.400M8.500 .3l-8 7.400" stroke="#b9b9b9" stroke-width="1"/></svg>
<svg style="left:240.500px;top:166px" width="10" height="8" viewBox="0 0 10 8"><path d="M.5 4.500L3.500 7.500 9.500 .5" fill="none" stroke="#b9b9b9" stroke-width="1"/></svg>
<div class="t" style="left:265px;top:163px;font-family:'Liberation Serif',serif;font-style:italic;font-size:12px;color:#666">f<span style="font-size:8px;position:relative;top:1.500px;left:-.5px">x</span></div>
<div class="ab" style="left:286.300px;top:160.300px;width:427.500px;height:19.600px;background:#fff;border:1px solid #d9d9d9"></div>
<div class="t" style="left:292.900px;top:166.200px;font-family:'Liberation Mono',monospace;font-size:7.930px;color:#333">= Table.TransformColumnTypes(Source,{{"Full Name", type text}})</div>
<svg style="left:701px;top:167.500px" width="9" height="6" viewBox="0 0 9 6"><path d="M.6 .8L4.500 4.800 8.400 .8" fill="none" stroke="#555" stroke-width="1.100"/></svg>
<div class="ab" style="left:203.400px;top:183.7px;width:107.400px;height:167.00px;background:#d6f0e2;border:1px solid #cbcbcb"></div>
<div class="ab" style="left:203.900px;top:184.2px;width:20.900px;height:166.00px;background:#f1f1f1;border-right:1px solid #bdbdbd"></div>
<div class="ab" style="left:224.500px;top:184.2px;width:85.800px;height:14.2px;background:#d2ecdc"></div>
<div class="ab" style="left:203.900px;top:197.89999999999998px;width:106.400px;height:1px;background:#b5b5b5"></div>
<svg style="left:208px;top:187.0px" width="13" height="9" viewBox="0 0 13 9"><rect x=".5" y=".5" width="8.500" height="7.500" fill="#fff" stroke="#7d7d7d" stroke-width=".8"/><rect x=".5" y=".5" width="8.500" height="1.600" fill="#3c78c3"/><path d="M.5 4.200h8.500M.5 6.100h8.500M3.300 2.100v6M6.200 2.100v6" stroke="#9a9a9a" stroke-width=".6"/><path d="M10.200 6h2.600l-1.300 1.800z" fill="#444"/></svg>
<div class="t" style="left:226.500px;top:188.89999999999998px;font-size:6.800px;color:#333;font-weight:700">A</div><div class="t" style="left:231px;top:185.89999999999998px;font-size:5.200px;color:#333;font-weight:700">B</div><div class="t" style="left:232.500px;top:191.5px;font-size:6.400px;color:#333;font-weight:700">C</div>
<div class="t" style="left:242.600px;top:188.1px;font-size:7.500px;color:#333;font-weight:700">Full Name</div>
<div class="ab" style="left:297.100px;top:185.5px;width:11px;height:11px;background:#fff;border:1px solid #b9b9b9"></div><svg style="left:300.600px;top:189.89999999999998px" width="4" height="3" viewBox="0 0 4 3"><path d="M0 0h4L2 2.500z" fill="#444"/></svg>
<div class="c" style="left:214.200px;top:202.70px;font-size:8.300px;color:#444">1</div>
<div class="t" style="left:227.800px;top:202.70px;font-size:7.800px;color:#38443e">Bibi Gardner</div>
<div class="ab" style="left:203.900px;top:213.13px;width:106.400px;height:1px;background:#cde0d5"></div><div class="ab" style="left:203.900px;top:213.13px;width:20.900px;height:1px;background:#cdcdcd"></div>
<div class="c" style="left:214.200px;top:217.93px;font-size:8.300px;color:#444">2</div>
<div class="t" style="left:227.800px;top:217.93px;font-size:7.800px;color:#38443e">Ebony Weiss</div>
<div class="ab" style="left:203.900px;top:228.36px;width:106.400px;height:1px;background:#cde0d5"></div><div class="ab" style="left:203.900px;top:228.36px;width:20.900px;height:1px;background:#cdcdcd"></div>
<div class="c" style="left:214.200px;top:233.16px;font-size:8.300px;color:#444">3</div>
<div class="t" style="left:227.800px;top:233.16px;font-size:7.800px;color:#38443e">Vinny Sparks</div>
<div class="ab" style="left:203.900px;top:243.59px;width:106.400px;height:1px;background:#cde0d5"></div><div class="ab" style="left:203.900px;top:243.59px;width:20.900px;height:1px;background:#cdcdcd"></div>
<div class="c" style="left:214.200px;top:248.39px;font-size:8.300px;color:#444">4</div>
<div class="t" style="left:227.800px;top:248.39px;font-size:7.800px;color:#38443e">Hassan Finley</div>
<div class="ab" style="left:203.900px;top:258.82px;width:106.400px;height:1px;background:#cde0d5"></div><div class="ab" style="left:203.900px;top:258.82px;width:20.900px;height:1px;background:#cdcdcd"></div>
<div class="c" style="left:214.200px;top:263.62px;font-size:8.300px;color:#444">5</div>
<div class="t" style="left:227.800px;top:263.62px;font-size:7.800px;color:#38443e">Antonio Nichols</div>
<div class="ab" style="left:203.900px;top:274.05px;width:106.400px;height:1px;background:#cde0d5"></div><div class="ab" style="left:203.900px;top:274.05px;width:20.900px;height:1px;background:#cdcdcd"></div>
<div class="c" style="left:214.200px;top:278.85px;font-size:8.300px;color:#444">6</div>
<div class="t" style="left:227.800px;top:278.85px;font-size:7.800px;color:#38443e">Orla Knapp</div>
<div class="ab" style="left:203.900px;top:289.28px;width:106.400px;height:1px;background:#cde0d5"></div><div class="ab" style="left:203.900px;top:289.28px;width:20.900px;height:1px;background:#cdcdcd"></div>
<div class="c" style="left:214.200px;top:294.08px;font-size:8.300px;color:#444">7</div>
<div class="t" style="left:227.800px;top:294.08px;font-size:7.800px;color:#38443e">Farhan Owen</div>
<div class="ab" style="left:203.900px;top:304.51px;width:106.400px;height:1px;background:#cde0d5"></div><div class="ab" style="left:203.900px;top:304.51px;width:20.900px;height:1px;background:#cdcdcd"></div>
<div class="c" style="left:214.200px;top:309.31px;font-size:8.300px;color:#444">8</div>
<div class="t" style="left:227.800px;top:309.31px;font-size:7.800px;color:#38443e">Aimee Hawkins</div>
<div class="ab" style="left:203.900px;top:319.74px;width:106.400px;height:1px;background:#cde0d5"></div><div class="ab" style="left:203.900px;top:319.74px;width:20.900px;height:1px;background:#cdcdcd"></div>
<div class="c" style="left:214.200px;top:324.54px;font-size:8.300px;color:#444">9</div>
<div class="t" style="left:227.800px;top:324.54px;font-size:7.800px;color:#38443e">Johnathan Nixon</div>
<div class="ab" style="left:203.900px;top:334.97px;width:106.400px;height:1px;background:#cde0d5"></div><div class="ab" style="left:203.900px;top:334.97px;width:20.900px;height:1px;background:#cdcdcd"></div>
<div class="c" style="left:214.200px;top:339.77px;font-size:8.300px;color:#444">10</div>
<div class="t" style="left:227.800px;top:339.77px;font-size:7.800px;color:#38443e">Maison Mcconnell</div>
<div class="t" style="left:728.300px;top:167px;font-size:13.350px;color:#4f8771">Query Settings</div>
<svg style="left:883px;top:170.500px" width="8" height="8" viewBox="0 0 8 8"><path d="M.4 .4l7.200 7.200M7.600 .4L.4 7.600" stroke="#666" stroke-width=".9"/></svg>
<svg style="left:726px;top:199.500px" width="5" height="5" viewBox="0 0 5 5"><path d="M4.500 0v4.500H0z" fill="#555"/></svg>
<div class="t" style="left:735.3px;top:198.52px;font-size:8px;color:#2b7a55;font-weight:700">PROPERTIES</div>
<div class="t" style="left:735.3px;top:212.55px;font-size:8.3px;color:#444;font-weight:400">Name</div>
<div class="ab" style="left:734.900px;top:223.400px;width:157.700px;height:15.400px;background:#fff;border:1px solid #a9a9a9"></div>
<div class="t" style="left:739.5px;top:228.73px;font-size:7.8px;color:#333;font-weight:400">Table1</div>
<div class="t" style="left:735.3px;top:247.41px;font-size:8.55px;color:#2b5797;font-weight:400">All Properties</div>
<svg style="left:726px;top:272.300px" width="5" height="5" viewBox="0 0 5 5"><path d="M4.500 0v4.500H0z" fill="#555"/></svg>
<div class="t" style="left:735.3px;top:271.32px;font-size:8px;color:#2b7a55;font-weight:700">APPLIED STEPS</div>
<div class="ab" style="left:734.900px;top:285px;width:157.700px;height:119px;background:#fff;border:1px solid #b9b9b9"></div>
<div class="t" style="left:750.2px;top:289.95px;font-size:8.3px;color:#444;font-weight:400">Source</div>
<div class="ab" style="left:735.500px;top:300.300px;width:156.500px;height:14px;background:#d3eede"></div>
<svg style="left:740px;top:304.300px" width="7" height="6" viewBox="0 0 7 6"><path d="M.4 .3l6.200 5.400M6.600 .3L.4 5.700" stroke="#555" stroke-width=".9"/></svg>
<div class="t" style="left:750.2px;top:304.34px;font-size:8.5px;color:#333;font-weight:400">Changed Type</div>
<div class="ab" style="left:69.5px;top:418.300px;width:840.5px;height:16.700px;background:#f3f3f3;border-top:1px solid #dcdcdc"></div>
<div class="t" style="left:74px;top:423.76px;font-size:7.4px;color:#444;font-weight:400">1 COLUMN, 10 ROWS</div>
<div class="t" style="left:776.8px;top:423.76px;font-size:7.4px;color:#444;font-weight:400">PREVIEW DOWNLOADED AT 6:48 PM</div>
<div class="ab" style="left:427px;top:137px;width:144.800px;height:116px;background:#f0f0f0;border:1px solid #c3c3c3;box-shadow:1.500px 1.500px 3px rgba(0,0,0,.28)"></div>
<div class="ab" style="left:446px;top:138px;width:1px;height:113px;background:#dcdcdc"></div>
<div class="ab" style="left:452px;top:186.300px;width:117px;height:1px;background:#cfcfcf"></div>
<div class="t" style="left:452.8px;top:159.39px;font-size:8.06px;color:#151515;font-weight:400">By Number of Characters</div>
<div class="t" style="left:452.8px;top:174.79px;font-size:8.06px;color:#151515;font-weight:400">By Positions</div>
<div class="t" style="left:452.8px;top:192.39px;font-size:8.06px;color:#151515;font-weight:400">By Lowercase to Uppercase</div>
<div class="t" style="left:452.8px;top:208.19px;font-size:8.06px;color:#151515;font-weight:400">By Uppercase to Lowercase</div>
<div class="t" style="left:452.8px;top:224.29px;font-size:8.06px;color:#151515;font-weight:400">By Digit to Non-Digit</div>
<div class="t" style="left:452.8px;top:240.19px;font-size:8.06px;color:#151515;font-weight:400">By Non-Digit to Digit</div>
<div class="ab" style="left:96px;top:66px;width:74.800px;height:23.800px;border:7.100px solid #ed1c24;border-right-width:7.300px"></div>
<div class="ab" style="left:424px;top:133px;width:148px;height:27px;border:7px solid #ed1c24;border-right-width:8px"></div>
<div class="ab" style="left:431px;top:140px;width:133px;height:13px;background:#ebebeb"></div>
<div class="t" style="left:452.8px;top:142.79px;font-size:8.06px;color:#151515;font-weight:400">By Delimiter</div>
<svg style="left:0;top:0" width="980" height="504" viewBox="0 0 980 504">
<path d="M131.900 93.800L149.300 132.400H141V172.900H123.100V132.400H114.800z" fill="#000"/>
<path d="M305.700 109.100H356.800V100.800L409.300 117.700 356.800 134.700V125.900H305.700z" fill="#000"/>
<path d="M586.900 146.800L643.500 133V140.200H700.800V152.800H643.500V160z" fill="#000"/>
</svg>
</body></html>
